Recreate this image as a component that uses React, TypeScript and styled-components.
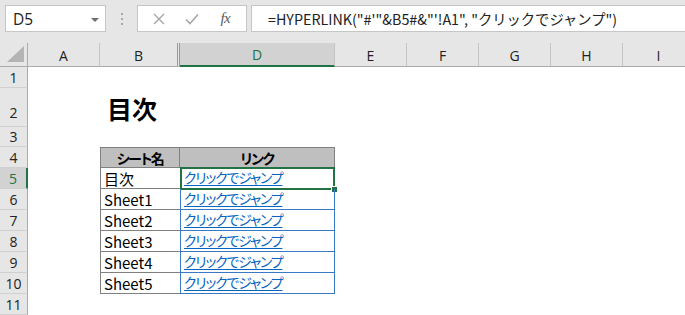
import React from 'react';
import styled, { createGlobalStyle } from 'styled-components';

const GREEN = '#217346';
const GRID_GRAY = '#808080';
const LINK_BLUE = '#3a78c8';

const GlobalStyle = createGlobalStyle`
  html, body { margin: 0; padding: 0; background: #ffffff; overflow: hidden; }
  body { font-family: "Noto Sans CJK JP", "Noto Sans", sans-serif; }
  #root { width: 685px; height: 315px; }
`;

const Window = styled.div`
  width: 685px;
  height: 315px;
  overflow: hidden;
  display: flex;
  flex-direction: column;
  background: #ffffff;
`;

const FormulaBar = styled.div`
  flex: none;
  height: 43px;
  box-sizing: border-box;
  padding: 5px 0 0 5px;
  background: #e6e6e6;
  display: flex;
  align-items: flex-start;
`;

const Box = styled.div`
  height: 27px;
  box-sizing: border-box;
  background: #ffffff;
  border: 1px solid #c6c6c6;
  display: flex;
  align-items: center;
`;

const NameBox = styled(Box)`
  width: 101px;
  justify-content: space-between;
  padding: 0 6px 0 7px;
  font-family: "Open Sans", "Noto Sans", sans-serif;
  font-size: 15.5px;
  color: #222222;
`;

const DropArrow = styled.span`
  width: 0;
  height: 0;
  border-left: 4px solid transparent;
  border-right: 4px solid transparent;
  border-top: 4px solid #6e6e6e;
  margin-top: 2px;
`;

const Grip = styled.div`
  width: 31px;
  height: 27px;
  display: flex;
  flex-direction: column;
  align-items: center;
  justify-content: center;
  gap: 3px;
`;

const GripDot = styled.span`
  width: 2px;
  height: 2px;
  background: #a8a8a8;
`;

const ButtonsBox = styled(Box)`
  width: 110px;
  justify-content: space-around;
  padding: 0 4px;
`;

const BarIcon = styled.span`
  width: 28px;
  display: flex;
  justify-content: center;
  align-items: center;
`;

const Fx = styled.span`
  font-family: "Liberation Serif", serif;
  font-style: italic;
  font-size: 15px;
  color: #595959;
  letter-spacing: -0.5px;
`;

const FormulaInput = styled(Box)`
  flex: 1;
  margin-left: 4px;
  border-right: none;
  padding-left: 16px;
  font-family: "Noto Sans CJK JP", sans-serif;
  font-size: 14.3px;
  color: #222222;
  white-space: nowrap;
  overflow: hidden;
`;

const Sheet = styled.div`
  flex: none;
  display: grid;
  grid-template-columns: 28px 72px 80px 155px repeat(5, 72px);
  grid-template-rows: 24px 21px 39px 20px repeat(8, 21px);
`;

const HeaderBase = styled.div`
  background: #e6e6e6;
  box-sizing: border-box;
  display: flex;
  align-items: center;
  justify-content: center;
  font-family: "Open Sans", "Noto Sans", sans-serif;
  font-size: 14px;
  color: #222222;
`;

const Corner = styled(HeaderBase)`
  grid-column: 1;
  grid-row: 1;
  position: relative;
  border-right: 1px solid #ababab;
  border-bottom: 1px solid #ababab;
  align-items: flex-end;
  justify-content: flex-end;
  padding: 0 3px 4px 0;
`;

const CornerTriangle = styled.span`
  width: 0;
  height: 0;
  border-left: 17px solid transparent;
  border-bottom: 16px solid #b4b4b4;
`;

const ColHeader = styled(HeaderBase)<{ $col: number; $active?: boolean; $hiddenAfter?: boolean }>`
  grid-column: ${p => p.$col};
  grid-row: 1;
  padding-top: 1px;
  background: ${p => (p.$active ? '#d2d2d2' : '#e6e6e6')};
  color: ${p => (p.$active ? GREEN : '#222222')};
  border-bottom: ${p => (p.$active ? `2px solid ${GREEN}` : '1px solid #ababab')};
  border-right: ${p => (p.$hiddenAfter ? '3px double #9a9a9a' : '1px solid #c4c4c4')};
`;

const RowHeader = styled(HeaderBase)<{ $row: number; $active?: boolean }>`
  grid-column: 1;
  grid-row: ${p => p.$row + 1};
  background: ${p => (p.$active ? '#d2d2d2' : '#e6e6e6')};
  color: ${p => (p.$active ? GREEN : '#222222')};
  border-right: ${p => (p.$active ? `2px solid ${GREEN}` : '1px solid #ababab')};
  border-bottom: 1px solid #d0d0d0;
  padding-top: ${p => (p.$row === 2 ? '10px' : '0')};
`;

const Title = styled.div`
  grid-column: 3 / 5;
  grid-row: 3;
  align-self: end;
  padding: 0 0 4px 7px;
  font-family: "Noto Sans CJK JP", sans-serif;
  font-weight: 700;
  font-size: 25px;
  line-height: 30px;
  color: #000000;
`;

const Table = styled.div`
  grid-column: 3 / 5;
  grid-row: 5 / 12;
  display: grid;
  grid-template-columns: 80px 155px;
  grid-template-rows: repeat(7, 21px);
`;

const HeadCell = styled.div<{ $first?: boolean }>`
  box-sizing: border-box;
  background: #bfbfbf;
  border-top: 1px solid ${GRID_GRAY};
  border-bottom: 1px solid ${GRID_GRAY};
  border-right: 1px solid ${GRID_GRAY};
  border-left: ${p => (p.$first ? `1px solid ${GRID_GRAY}` : 'none')};
  display: flex;
  align-items: center;
  justify-content: center;
  font-family: "Noto Sans CJK JP", sans-serif;
  font-weight: 700;
  font-size: 14px;
  font-feature-settings: "palt";
  letter-spacing: -1.4px;
  color: #000000;
  line-height: 1;
`;

const NameCell = styled.div`
  box-sizing: border-box;
  border-left: 1px solid ${GRID_GRAY};
  border-bottom: 1px solid ${GRID_GRAY};
  display: flex;
  align-items: center;
  padding-left: 3px;
  font-family: "Noto Sans CJK JP", sans-serif;
  font-size: 15px;
  color: #000000;
  line-height: 1;
`;

const LinkCell = styled.div`
  position: relative;
  box-sizing: border-box;
  border-left: 1px solid ${LINK_BLUE};
  border-right: 1px solid ${LINK_BLUE};
  border-bottom: 1px solid ${LINK_BLUE};
  display: flex;
  align-items: center;
  padding-left: 3px;
  line-height: 1;
`;

const Link = styled.span`
  font-family: "Noto Sans CJK JP", sans-serif;
  font-size: 13.8px;
  font-feature-settings: "palt";
  letter-spacing: -1.1px;
  color: #0563c1;
  text-decoration: underline;
  text-underline-offset: 2px;
  white-space: nowrap;
`;

const Selection = styled.div`
  position: absolute;
  top: -1px;
  left: -1px;
  right: -1px;
  bottom: -2px;
  border: 2px solid ${GREEN};
  pointer-events: none;
`;

const FillHandle = styled.span`
  position: absolute;
  right: -5px;
  bottom: -5px;
  width: 5px;
  height: 5px;
  background: ${GREEN};
  border: 1px solid #ffffff;
`;

const columns = ['A', 'B', 'D', 'E', 'F', 'G', 'H', 'I'];
const rowNumbers = [1, 2, 3, 4, 5, 6, 7, 8, 9, 10, 11];
const sheets = ['目次', 'Sheet1', 'Sheet2', 'Sheet3', 'Sheet4', 'Sheet5'];

export default function App() {
  return (
    <Window>
      <GlobalStyle />
      <FormulaBar>
        <NameBox>
          <span>D5</span>
          <DropArrow />
        </NameBox>
        <Grip>
          <GripDot />
          <GripDot />
          <GripDot />
        </Grip>
        <ButtonsBox>
          <BarIcon>
            <svg width="12" height="12" viewBox="0 0 12 12">
              <path d="M1 1 L11 11 M11 1 L1 11" stroke="#a6a6a6" strokeWidth="1.4" fill="none" />
            </svg>
          </BarIcon>
          <BarIcon>
            <svg width="14" height="12" viewBox="0 0 14 12">
              <path d="M1 6.5 L5 10.5 L13 1.5" stroke="#a6a6a6" strokeWidth="1.6" fill="none" />
            </svg>
          </BarIcon>
          <BarIcon>
            <Fx>fx</Fx>
          </BarIcon>
        </ButtonsBox>
        <FormulaInput>=HYPERLINK("#'"&amp;B5#&amp;"'!A1", "クリックでジャンプ")</FormulaInput>
      </FormulaBar>
      <Sheet>
        <Corner>
          <CornerTriangle />
        </Corner>
        {columns.map((c, i) => (
          <ColHeader key={c} $col={i + 2} $active={c === 'D'} $hiddenAfter={c === 'B'}>
            {c}
          </ColHeader>
        ))}
        {rowNumbers.map(n => (
          <RowHeader key={n} $row={n} $active={n === 5}>
            {n}
          </RowHeader>
        ))}
        <Title>目次</Title>
        <Table>
          <HeadCell $first>シート名</HeadCell>
          <HeadCell>リンク</HeadCell>
          {sheets.map((s, i) => (
            <React.Fragment key={s}>
              <NameCell>{s}</NameCell>
              <LinkCell>
                <Link>クリックでジャンプ</Link>
                {i === 0 && (
                  <Selection>
                    <FillHandle />
                  </Selection>
                )}
              </LinkCell>
            </React.Fragment>
          ))}
        </Table>
      </Sheet>
    </Window>
  );
}
